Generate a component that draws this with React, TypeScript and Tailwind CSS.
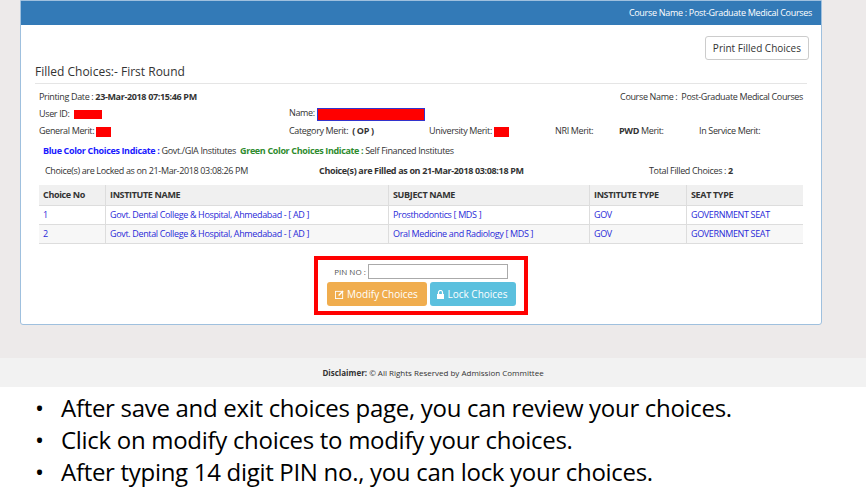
import React from "react";

export default function App() {
  const f = { fontFamily: "'Open Sans', 'Liberation Sans', sans-serif" };
  return (
    <div className="w-[866px] h-[497px] overflow-hidden bg-white" style={f}>
      <div className="bg-[#edeaea] h-[358px] pl-[20px] pr-[44px]">
        <div className="w-[802px] bg-white border border-[#9fc0de] rounded-b-[3px] h-[325px]">
          <div className="h-[24px] bg-[#337ab7] flex items-center justify-end pr-[9px] text-white text-[9px] tracking-[-0.3px]">
            Course Name : Post-Graduate Medical Courses
          </div>
          <div className="flex justify-end pr-[12px] pt-[11px]">
            <div className="border border-[#ccc] rounded-[3px] px-[7px] h-[24px] flex items-center text-[10px] text-[#333]">Print Filled Choices</div>
          </div>
          <div className="mx-[14px] mt-[3px] border-b border-[#e5e5e5] pb-[2px] text-[12px] text-[#333]">Filled Choices:- First Round</div>
          <div className="px-[18px] text-[9px] leading-[12px] text-[#333] tracking-[-0.35px]">
            <div className="flex justify-between mt-[7px]"><span>Printing Date : <b>23-Mar-2018 07:15:46 PM</b></span><span>Course Name : &nbsp;Post-Graduate Medical Courses</span></div>
            <div className="flex mt-[4px] h-[14px] items-center">
              <span className="w-[250px]">User ID: &nbsp;<span className="inline-block w-[28px] h-[9px] bg-[#ff0000] align-middle" /></span>
              <span>Name: <span className="inline-block w-[108px] h-[13px] bg-[#ff0000] border border-[#33c] align-middle" /></span>
            </div>
            <div className="flex mt-[4px] items-center">
              <span className="w-[250px]">General Merit: <span className="inline-block w-[15px] h-[10px] bg-[#ff0000] align-middle" /></span>
              <span className="w-[140px]">Category Merit: &nbsp;<b>( OP )</b></span>
              <span className="w-[126px]">University Merit: <span className="inline-block w-[15px] h-[10px] bg-[#ff0000] align-middle" /></span>
              <span className="w-[64px]">NRI Merit:</span>
              <span className="w-[80px]"><b>PWD</b> Merit:</span>
              <span>In Service Merit:</span>
            </div>
            <div className="mt-[8px] pl-[4px]"><b className="text-[#1a1aff]">Blue Color Choices Indicate :</b> Govt./GIA Institutes &nbsp;<b className="text-[#2e8b2e]">Green Color Choices Indicate :</b> Self Financed Institutes</div>
            <div className="flex mt-[8px] pl-[6px]">
              <span className="w-[274px]">Choice(s) are Locked as on 21-Mar-2018 03:08:26 PM</span>
              <span className="w-[330px] font-bold">Choice(s) are Filled as on 21-Mar-2018 03:08:18 PM</span>
              <span>Total Filled Choices : <b>2</b></span>
            </div>
          </div>
          <div className="mx-[18px] mt-[8px] text-[9px] tracking-[-0.35px]">
            <div className="grid grid-cols-[67px_283px_201px_97px_1fr] bg-[#f0f0f0] h-[21px] items-center font-bold text-[#333] border-b border-[#ddd]">
              {["Choice No","INSTITUTE NAME","SUBJECT NAME","INSTITUTE TYPE","SEAT TYPE"].map((h,i)=>(<div key={i} className="px-[4px] h-full flex items-center border-r border-[#ddd] last:border-r-0">{h}</div>))}
            </div>
            {[["1","Prosthodontics [ MDS ]","bg-white"],["2","Oral Medicine and Radiology [ MDS ]","bg-[#f7f7f7]"]].map(([n,s,bg])=>(
              <div key={n} className={`grid grid-cols-[67px_283px_201px_97px_1fr] h-[19px] items-center text-[#2a2ad8] border-b border-[#ddd] ${bg}`}>
                {[n,"Govt. Dental College & Hospital, Ahmedabad - [ AD ]",s,"GOV","GOVERNMENT SEAT"].map((c,i)=>(<div key={i} className="px-[4px] h-full flex items-center border-r border-[#ddd] last:border-r-0">{c}</div>))}
              </div>
            ))}
          </div>
          <div className="flex justify-center mt-[12px]">
            <div className="border-[4px] border-[#ff0000] w-[214px] h-[59px] flex flex-col items-center pt-[4px]">
              <div className="flex items-center text-[8px] text-[#555] gap-[2px]"><span>PIN NO :</span><div className="w-[140px] h-[15px] border border-[#aaa]" /></div>
              <div className="flex gap-[3px] mt-[3px] text-white text-[10px]">
                <div className="w-[100px] h-[24px] bg-[#f0ad4e] rounded-[3px] flex items-center justify-center gap-[3px]">
                  <svg width="9" height="9" viewBox="0 0 10 10"><rect x="0.5" y="1.5" width="8" height="8" fill="none" stroke="white"/><path d="M4 6 L9 1" stroke="white" strokeWidth="1.5"/></svg>Modify Choices</div>
                <div className="w-[86px] h-[24px] bg-[#5bc0de] rounded-[3px] flex items-center justify-center gap-[3px]">
                  <svg width="7" height="9" viewBox="0 0 7 9"><rect x="0" y="4" width="7" height="5" fill="white"/><path d="M1.5 4 V2.5 a2 2 0 0 1 4 0 V4" fill="none" stroke="white" strokeWidth="1.2"/></svg>Lock Choices</div>
              </div>
            </div>
          </div>
        </div>
      </div>
      <div className="bg-[#f2f2f2] h-[29px] flex items-center justify-center text-[8px] text-[#333]"><span><b>Disclaimer:</b> © All Rights Reserved by Admission Committee</span></div>
      <ul className="pl-[35px] pt-[5px] text-[24px] leading-[32px] text-black tracking-[-0.3px]">
        {["After save and exit choices page, you can review your choices.","Click on modify choices to modify your choices.","After typing 14 digit PIN no., you can lock your choices."].map(t=>(
          <li key={t} className="flex"><span className="w-[26px]">•</span>{t}</li>
        ))}
      </ul>
    </div>
  );
}
